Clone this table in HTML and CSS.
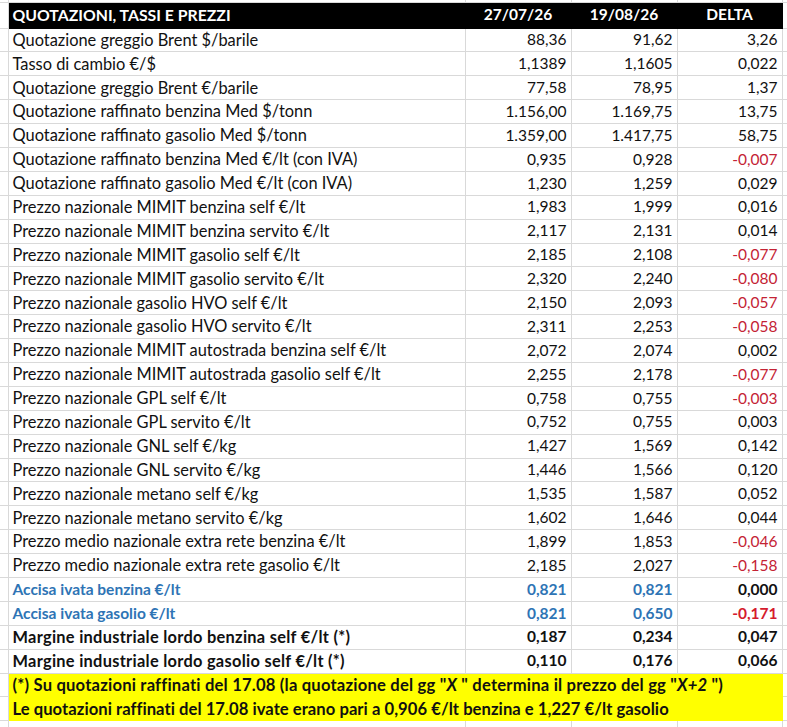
FILE: index.html
```html
<!DOCTYPE html>
<html lang="it">
<head>
<meta charset="utf-8">
<title>Quotazioni, tassi e prezzi</title>
<link rel="stylesheet" href="styles.css">
</head>
<body>
<table class="sheet">
  <colgroup>
    <col class="c-stub"><col class="c-label"><col class="c-num"><col class="c-num"><col class="c-delta"><col class="c-tail">
  </colgroup>
  <tr class="top"><td class="stub"></td><td></td><td></td><td></td><td></td><td class="tail"></td></tr>
  <tr class="head"><td class="stub"></td><td class="lbl">QUOTAZIONI, TASSI E PREZZI</td><td class="ctr">27/07/26</td><td class="ctr">19/08/26</td><td class="ctr">DELTA</td><td class="tail"></td></tr>
  <tr><td class="stub"></td><td class="lbl">Quotazione greggio Brent $/barile</td><td>88,36</td><td>91,62</td><td>3,26</td><td class="tail"></td></tr>
  <tr><td class="stub"></td><td class="lbl">Tasso di cambio €/$</td><td>1,1389</td><td>1,1605</td><td>0,022</td><td class="tail"></td></tr>
  <tr><td class="stub"></td><td class="lbl">Quotazione greggio Brent €/barile</td><td>77,58</td><td>78,95</td><td>1,37</td><td class="tail"></td></tr>
  <tr><td class="stub"></td><td class="lbl">Quotazione raffinato benzina Med $/tonn</td><td>1.156,00</td><td>1.169,75</td><td>13,75</td><td class="tail"></td></tr>
  <tr><td class="stub"></td><td class="lbl">Quotazione raffinato gasolio Med $/tonn</td><td>1.359,00</td><td>1.417,75</td><td>58,75</td><td class="tail"></td></tr>
  <tr><td class="stub"></td><td class="lbl">Quotazione raffinato benzina Med €/lt (con IVA)</td><td>0,935</td><td>0,928</td><td class="neg">-0,007</td><td class="tail"></td></tr>
  <tr><td class="stub"></td><td class="lbl">Quotazione raffinato gasolio Med €/lt (con IVA)</td><td>1,230</td><td>1,259</td><td>0,029</td><td class="tail"></td></tr>
  <tr><td class="stub"></td><td class="lbl">Prezzo nazionale MIMIT benzina self €/lt</td><td>1,983</td><td>1,999</td><td>0,016</td><td class="tail"></td></tr>
  <tr><td class="stub"></td><td class="lbl">Prezzo nazionale MIMIT benzina servito €/lt</td><td>2,117</td><td>2,131</td><td>0,014</td><td class="tail"></td></tr>
  <tr><td class="stub"></td><td class="lbl">Prezzo nazionale MIMIT gasolio self €/lt</td><td>2,185</td><td>2,108</td><td class="neg">-0,077</td><td class="tail"></td></tr>
  <tr><td class="stub"></td><td class="lbl">Prezzo nazionale MIMIT gasolio servito €/lt</td><td>2,320</td><td>2,240</td><td class="neg">-0,080</td><td class="tail"></td></tr>
  <tr><td class="stub"></td><td class="lbl">Prezzo nazionale gasolio HVO self €/lt</td><td>2,150</td><td>2,093</td><td class="neg">-0,057</td><td class="tail"></td></tr>
  <tr><td class="stub"></td><td class="lbl">Prezzo nazionale gasolio HVO servito €/lt</td><td>2,311</td><td>2,253</td><td class="neg">-0,058</td><td class="tail"></td></tr>
  <tr><td class="stub"></td><td class="lbl">Prezzo nazionale MIMIT autostrada benzina self €/lt</td><td>2,072</td><td>2,074</td><td>0,002</td><td class="tail"></td></tr>
  <tr><td class="stub"></td><td class="lbl">Prezzo nazionale MIMIT autostrada gasolio self €/lt</td><td>2,255</td><td>2,178</td><td class="neg">-0,077</td><td class="tail"></td></tr>
  <tr><td class="stub"></td><td class="lbl">Prezzo nazionale GPL self €/lt</td><td>0,758</td><td>0,755</td><td class="neg">-0,003</td><td class="tail"></td></tr>
  <tr><td class="stub"></td><td class="lbl">Prezzo nazionale GPL servito €/lt</td><td>0,752</td><td>0,755</td><td>0,003</td><td class="tail"></td></tr>
  <tr><td class="stub"></td><td class="lbl">Prezzo nazionale GNL self €/kg</td><td>1,427</td><td>1,569</td><td>0,142</td><td class="tail"></td></tr>
  <tr><td class="stub"></td><td class="lbl">Prezzo nazionale GNL servito €/kg</td><td>1,446</td><td>1,566</td><td>0,120</td><td class="tail"></td></tr>
  <tr><td class="stub"></td><td class="lbl">Prezzo nazionale metano self €/kg</td><td>1,535</td><td>1,587</td><td>0,052</td><td class="tail"></td></tr>
  <tr><td class="stub"></td><td class="lbl">Prezzo nazionale metano servito €/kg</td><td>1,602</td><td>1,646</td><td>0,044</td><td class="tail"></td></tr>
  <tr><td class="stub"></td><td class="lbl">Prezzo medio nazionale extra rete benzina €/lt</td><td>1,899</td><td>1,853</td><td class="neg">-0,046</td><td class="tail"></td></tr>
  <tr><td class="stub"></td><td class="lbl">Prezzo medio nazionale extra rete gasolio €/lt</td><td>2,185</td><td>2,027</td><td class="neg">-0,158</td><td class="tail"></td></tr>
  <tr class="blue"><td class="stub"></td><td class="lbl">Accisa ivata benzina €/lt</td><td>0,821</td><td>0,821</td><td class="black">0,000</td><td class="tail"></td></tr>
  <tr class="blue"><td class="stub"></td><td class="lbl">Accisa ivata gasolio €/lt</td><td>0,821</td><td>0,650</td><td class="neg-bold">-0,171</td><td class="tail"></td></tr>
  <tr class="bold"><td class="stub"></td><td class="lbl">Margine industriale lordo benzina self €/lt (*)</td><td>0,187</td><td>0,234</td><td>0,047</td><td class="tail"></td></tr>
  <tr class="bold"><td class="stub"></td><td class="lbl">Margine industriale lordo gasolio self €/lt (*)</td><td>0,110</td><td>0,176</td><td>0,066</td><td class="tail"></td></tr>
  <tr class="note first"><td class="stub"></td><td class="lbl" colspan="4">(*) Su quotazioni raffinati del 17.08 (la quotazione del gg "<i>X</i> " determina il prezzo del gg "<i>X+2</i> ")</td><td class="tail"></td></tr>
  <tr class="note last"><td class="stub"></td><td class="lbl" colspan="4">Le quotazioni raffinati del 17.08 ivate erano pari a 0,906 €/lt benzina e 1,227 €/lt gasolio</td><td class="tail"></td></tr>
  <tr class="after"><td class="stub"></td><td></td><td></td><td></td><td></td><td class="tail"></td></tr>
</table>
</body>
</html>
```

FILE: styles.css
```css
html, body {
  margin: 0;
  padding: 0;
  background: #ffffff;
}

.sheet {
  border-collapse: collapse;
  table-layout: fixed;
  width: 788px;
  font-family: Lato, "Open Sans", sans-serif;
  font-size: 15.5px;
  color: #111111;
}

.c-stub { width: 8px; }
.c-label { width: 457px; }
.c-num { width: 106px; }
.c-delta { width: 105px; }
.c-tail { width: 6px; }

.sheet td {
  height: 23.9px;
  padding: 0 4px 0 0;
  border: 1px solid #d9d9d9;
  text-align: right;
  white-space: nowrap;
  overflow: hidden;
  box-sizing: border-box;
  line-height: 1;
}

.sheet td.lbl {
  text-align: left;
  padding: 0 0 0 4px;
  font-size: 16.4px;
}

.sheet td.stub,
.sheet td.tail {
  padding: 0;
}

.sheet td.stub { border-left: none; }
.sheet td.tail { border-right: none; }

.top td {
  height: 2px;
  border-top: none;
}

.head td {
  height: 26px;
}

.head td:not(.stub):not(.tail) {
  background: #000000;
  color: #ffffff;
  font-weight: 700;
  border-color: #000000;
}

.sheet .head td.lbl { font-size: 15.8px; }
.sheet .head td.ctr { text-align: center; padding: 0; }

.neg { color: #c42335; }
.blue td { color: #2e74b5; font-weight: 700; }
.sheet .blue td.lbl { font-size: 15.5px; }
.blue td.black { color: #111111; }
.blue td.neg-bold { color: #d51b2d; }
.bold td { font-weight: 700; }
.sheet .bold td.lbl { font-size: 16.4px; letter-spacing: 0.28px; }

.note td.lbl {
  background: #ffff00;
  font-weight: 700;
  border-color: #ffff00;
}

.sheet .note td.lbl { font-size: 16.6px; }
.sheet .note.first td.lbl { letter-spacing: 0.2px; border-top-color: #d9d9d9; }
.sheet .note.last td.lbl { letter-spacing: 0.05px; }

.after td { height: 6px; border-bottom: none; }
```
